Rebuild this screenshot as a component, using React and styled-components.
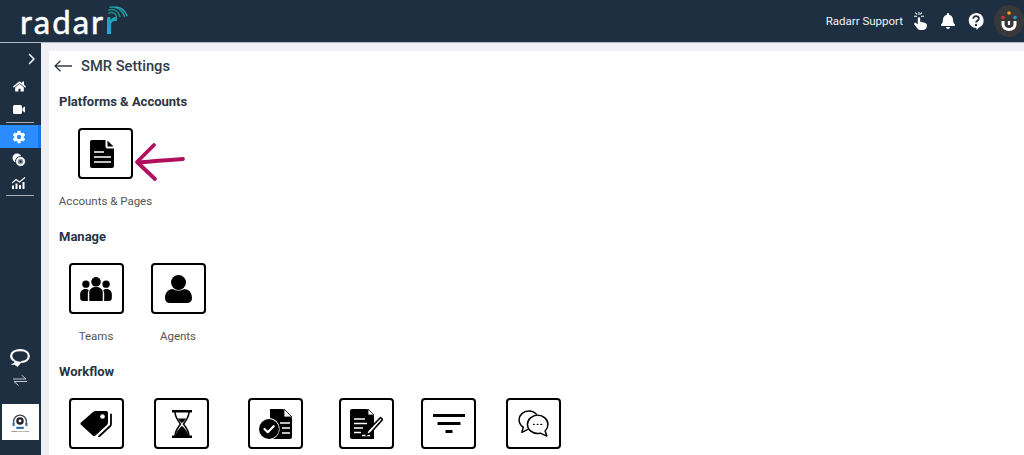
import styled, { createGlobalStyle } from "styled-components";
import { FaHome, FaBell } from "react-icons/fa";
import { IoSettingsSharp } from "react-icons/io5";
import { FaChevronRight } from "react-icons/fa6";

const GlobalStyle = createGlobalStyle`
    html, body {
        margin: 0;
        height: 100%;
        overflow: hidden;
        font-family: "Roboto", "Liberation Sans", sans-serif;
    }
    * {
        box-sizing: border-box;
    }
`;

const Page = styled.div`
    width: 1024px;
    height: 455px;
    display: flex;
    flex-direction: column;
    overflow: hidden;
    background-color: #EEF0F6;
`;
const Topo = styled.header`
    height: 43px;
    flex-shrink: 0;
    display: flex;
    align-items: center;
    justify-content: space-between;
    padding: 0 0 0 20px;
    background-color: #1E2F42;
    border-bottom: 1px solid #B4B8C0;
`;
const Logo = styled.div`
    position: relative;
    display: flex;
    font-family: "Lato", sans-serif;
    font-size: 33px;
    font-weight: 400;
    line-height: 40px;
    letter-spacing: 2px;
    color: #FFFFFF;
    -webkit-text-stroke: 0.5px #FFFFFF;
    span {
        color: transparent;
        -webkit-text-stroke: 0;
        background: linear-gradient(#1A9E93, #27A9E1);
        -webkit-background-clip: text;
        background-clip: text;
        font-weight: 700;
    }
    svg {
        position: absolute;
        right: -9px;
        top: 5px;
    }
`;
const TopoDireita = styled.div`
    display: flex;
    align-items: center;
    color: #FFFFFF;
`;
const Suporte = styled.span`
    font-size: 11.5px;
    color: #F0F2F5;
    margin-right: 3px;
`;
const IconeTopo = styled.div`
    width: 28px;
    display: flex;
    justify-content: center;
    align-items: center;
`;
const Avatar = styled.div`
    width: 30px;
    height: 32px;
    margin-left: 4px;
    border-radius: 50%;
    background-color: #38383A;
    display: flex;
    align-items: center;
    justify-content: center;
`;
const Corpo = styled.div`
    flex: 1;
    display: flex;
    min-height: 0;
`;
const Lateral = styled.nav`
    width: 41px;
    flex-shrink: 0;
    display: flex;
    flex-direction: column;
    align-items: stretch;
    background-color: #1E2F42;
    color: #FFFFFF;
    padding-top: 7px;
`;
const Expandir = styled.div`
    height: 17px;
    display: flex;
    justify-content: flex-end;
    align-items: center;
    padding-right: 4px;
    margin-bottom: 8px;
`;
const ItemLateral = styled.div`
    height: 23px;
    display: flex;
    align-items: center;
    justify-content: center;
    padding-right: ${props => props.$ativo ? "0" : "3px"};
    background-color: ${props => props.$ativo ? "#2A8CFF" : "transparent"};
    border-right: ${props => props.$ativo ? "3px solid #1A73E8" : "0 none"};
`;
const Divisor = styled.div`
    height: 1px;
    margin: ${props => props.$margem};
    width: 28px;
    margin-left: 6px;
    background-color: #A9B0B8;
`;
const LateralBaixo = styled.div`
    margin-top: auto;
    display: flex;
    flex-direction: column;
    align-items: center;
    padding-bottom: 15px;
    padding-right: 1px;
`;
const Troca = styled.div`
    margin: 7px 0 16px;
    height: 14px;
    display: flex;
`;
const CaixaEmpresa = styled.div`
    width: 37px;
    height: 36px;
    background-color: #FFFFFF;
    display: flex;
    flex-direction: column;
    align-items: center;
    justify-content: center;
    padding-top: 3px;
    small {
        font-size: 2.5px;
        line-height: 4px;
        color: #333333;
        white-space: nowrap;
    }
`;
const Area = styled.main`
    flex: 1;
    padding: 8px 0 0 8px;
    min-width: 0;
`;
const Painel = styled.div`
    height: 100%;
    background-color: #FFFFFF;
    overflow: hidden;
    padding-left: 10px;
`;
const TopoPainel = styled.div`
    height: 30px;
    display: flex;
    align-items: center;
    gap: 9px;
    margin-left: -5px;
`;
const Titulo = styled.h1`
    margin: 0;
    font-size: 14.7px;
    font-weight: 500;
    line-height: 30px;
    color: #333C4C;
`;
const Secao = styled.h2`
    margin: ${props => props.$margem};
    font-size: 13px;
    font-weight: 700;
    line-height: 20px;
    color: #2A3444;
`;
const Linha = styled.div`
    display: flex;
    margin-top: 16px;
`;
const Item = styled.div`
    position: relative;
    width: ${props => props.$largura}px;
    flex-shrink: 0;
    display: flex;
    flex-direction: column;
    align-items: center;
    white-space: nowrap;
`;
const Tile = styled.div`
    width: 55px;
    height: 51px;
    border: 2px solid #000000;
    border-radius: 4px;
    background-color: #FFFFFF;
    display: flex;
    align-items: center;
    justify-content: center;
    color: #000000;
    padding-right: ${props => props.$recuo || 0}px;
`;
const Rotulo = styled.p`
    margin: 14px 0 0;
    font-size: 11.5px;
    line-height: 16px;
    color: #555555;
`;
const Seta = styled.svg`
    position: absolute;
    left: 75px;
    top: 14px;
`;

function IconeDocumento() {
    return (
        <svg width="24" height="28" viewBox="0 0 24 28">
            <path d="M2 0h13.500v6.500a2 2 0 0 0 2 2H24V26a2 2 0 0 1-2 2H2a2 2 0 0 1-2-2V2a2 2 0 0 1 2-2z" fill="#000" />
            <path d="M17.500.5l6 6h-5.500a.5.5 0 0 1-.5-.5z" fill="#000" />
            <path d="M4 12h10M4 17h17M4 22h17" stroke="#fff" strokeWidth="1.600" />
        </svg>
    );
}
function IconeEquipe() {
    return (
        <svg width="32" height="24" viewBox="0 0 33 25">
            <circle cx="16.500" cy="5" r="5" />
            <circle cx="6" cy="7.500" r="3.800" />
            <circle cx="27" cy="7.500" r="3.800" />
            <path d="M9.500 25V16c0-3.500 3-5.500 7-5.500s7 2 7 5.500v9z" />
            <path d="M8 25H3c-1.700 0-3-1-3-3v-4c0-3 2.500-5.500 5.500-5.500 1.500 0 2.700.5 3.500 1.300C8.300 15 8 16 8 17z" />
            <path d="M25 25h5c1.700 0 3-1 3-3v-4c0-3-2.500-5.500-5.500-5.500-1.500 0-2.700.5-3.500 1.300.7 1.200 1 2.200 1 3.200z" />
        </svg>
    );
}
function IconeAgente() {
    return (
        <svg width="27" height="28" viewBox="0 0 27 28">
            <circle cx="13.500" cy="7.500" r="7.500" />
            <path d="M0 23c0-6 4-9 8-9 2 1.200 3.500 1.600 5.500 1.600s3.500-.4 5.500-1.600c4 0 8 3 8 9 0 3.200-2 5-5 5H5c-3 0-5-1.800-5-5z" />
        </svg>
    );
}
function IconeEtiquetas() {
    return (
        <svg width="33" height="27" viewBox="0 0 33 27">
            <path d="M1 12.500 13 2c.8-.7 1.500-1 2.500-1H26c1.200 0 2 .8 2 2v9.500c0 1-.3 1.800-1 2.500L15.500 25.500c-.8.800-2 .8-2.800 0L1 14.800c-.7-.7-.7-1.600 0-2.300z" />
            <circle cx="22.500" cy="6.500" r="2.300" fill="#fff" />
            <path d="M31 4.500v9.500c0 .8-.3 1.500-.8 2L19 26.500" fill="none" stroke="#000" strokeWidth="1.800" strokeLinecap="round" />
        </svg>
    );
}
function IconeAmpulheta() {
    return (
        <svg width="20" height="28" viewBox="0 0 20 28">
            <path d="M0 0h20v2.500H0zM0 25.500h20V28H0z" />
            <path d="M3 2c0 5 2.500 8 5.500 12-3 4-5.500 7-5.500 12M17 2c0 5-2.500 8-5.500 12 3 4 5.500 7 5.500 12" fill="none" stroke="#000" strokeWidth="1.500" />
            <path d="M6 8.500h8c-.8 1.700-2.200 3-4 4.500-1.800-1.500-3.200-2.800-4-4.500zM3.500 26c.5-4 4-8 6.500-10 2.500 2 6 6 6.500 10z" />
        </svg>
    );
}
function IconeAprovado() {
    return (
        <svg width="34" height="30" viewBox="0 0 34 30">
            <path d="M11 0h13l9 9v19a2 2 0 0 1-2 2H14a11 11 0 0 0-3-21z" fill="#000" />
            <path d="M25 0l8 8h-8z" fill="#fff" stroke="#000" strokeWidth=".8" />
            <path d="M21 14h10M23 19h8M23 24h8" stroke="#fff" strokeWidth="1.500" />
            <circle cx="10" cy="20" r="10" fill="#000" />
            <path d="M5.500 20l3.200 3.200 6-6" fill="none" stroke="#fff" strokeWidth="2.200" strokeLinecap="round" strokeLinejoin="round" />
        </svg>
    );
}
function IconeNota() {
    return (
        <svg width="33" height="30" viewBox="0 0 33 30">
            <path d="M2 0h15l7 7v23H2a2 2 0 0 1-2-2V2a2 2 0 0 1 2-2z" />
            <path d="M18 0l6 6h-6z" fill="#fff" stroke="#000" strokeWidth=".8" />
            <path d="M4 10h11M4 14.500h13M4 19h9M4 23.500h7M12 26.500h8" stroke="#fff" strokeWidth="1.500" />
            <path d="M30.500 8.500l2 2-12 13.500-4.500 2.200 1.800-4.500z" fill="#fff" stroke="#000" strokeWidth="1.600" strokeLinejoin="round" />
        </svg>
    );
}
function IconeFiltro() {
    return (
        <svg width="32" height="19" viewBox="0 0 32 19">
            <path d="M0 1.500h32M4.500 9.500h23M12.500 17.500h7" stroke="#000" strokeWidth="2.800" fill="none" />
        </svg>
    );
}
function IconeConversa() {
    return (
        <svg width="31" height="27" viewBox="0 0 33 29" fill="none" stroke="#000" strokeWidth="1.600">
            <path d="M11 20.500l-7 3.500 1.500-5.500C2.500 16.500 1 13.500 1 10.500 1 5.500 5.500 1 11.500 1c3.500 0 6.500 1.500 8.500 4" strokeLinejoin="round" />
            <path d="M21 5.500c6 0 11 4.500 11 10 0 2.800-1.200 5.200-3 7l1.800 5.500-7-3.200c-1 .4-1.800.5-2.800.5-6 0-11-4.300-11-9.800s5-10 11-10z" strokeLinejoin="round" />
            <path d="M16.500 15.500h.8M20.500 15.500h.8M24.500 15.500h.8" strokeLinecap="round" strokeWidth="1.300" />
        </svg>
    );
}
function IconeMao() {
    return (
        <svg width="13" height="18" viewBox="0 0 13 18" fill="#fff">
            <path d="M3.800 6.500c0-1.600 2.400-1.600 2.400 0v3.300l3.500.6c2 .4 3.300 1.400 3.300 3 0 2.400-1.500 4.600-4.300 4.600H6.500c-1.500 0-2.500-.7-3.300-1.800L.4 12.500c-.8-1.200.5-2.500 1.600-1.500l1.800 1.500z" />
            <path d="M4.500 0h1v3h-1zM0 3.800h3v1H0zM7 3.800h3v1H7zM1 1l.7-.7 1.800 1.800-.7.7zM8.300 1l-.7-.7-1.800 1.800.7.7z" />
        </svg>
    );
}
function IconeAjuda() {
    return (
        <svg width="16" height="17" viewBox="0 0 16 17">
            <path d="M8 0a7.500 7.500 0 0 1 3 14.400L8.500 17v-2A7.500 7.500 0 0 1 8 0z" fill="#fff" />
            <path d="M5.200 5.800c0-1.700 1.200-2.700 2.800-2.700s2.800 1 2.800 2.500c0 2.100-2.800 2-2.800 4" fill="none" stroke="#1E2F42" strokeWidth="1.800" />
            <circle cx="8" cy="12" r="1.200" fill="#1E2F42" />
        </svg>
    );
}
function IconeMarca() {
    return (
        <svg width="16" height="20" viewBox="0 0 16 20">
            <circle cx="2" cy="6.500" r="1.800" fill="#D8342C" />
            <circle cx="8" cy="2" r="1.800" fill="#F0A020" />
            <circle cx="14" cy="6.500" r="1.800" fill="#1F9BD8" />
            <path d="M2 10v3.500a6 5 0 0 0 12 0V10" fill="none" stroke="#fff" strokeWidth="3" />
            <path d="M8 10v4" stroke="#fff" strokeWidth="2.200" />
        </svg>
    );
}
function IconeCamera() {
    return (
        <svg width="12" height="9" viewBox="0 0 12 9" fill="#fff">
            <rect x="0" y="0" width="9" height="9" rx="1.500" />
            <path d="M9.500 3l2.500-1.500v6L9.500 6z" />
        </svg>
    );
}
function IconeMonitor() {
    return (
        <svg width="14" height="14" viewBox="0 0 14 14">
            <circle cx="5" cy="5" r="4.500" fill="#fff" />
            <circle cx="8.500" cy="8.500" r="5" fill="#fff" stroke="#1E2F42" />
            <circle cx="8.500" cy="8.500" r="2.800" fill="#8A95A3" />
            <circle cx="8.500" cy="8.500" r="1.200" fill="#1E2F42" />
        </svg>
    );
}
function IconeGrafico() {
    return (
        <svg width="14" height="12" viewBox="0 0 14 12" fill="#fff">
            <path d="M0 12V8.500h2V12zM3.500 12V6.500h2V12zM7 12V8h2v4zM10.500 12V5h2v7z" />
            <path d="M0 6l4-3.500 3.500 2.500L13 .5" fill="none" stroke="#fff" strokeWidth="1.200" />
        </svg>
    );
}
function IconeChat() {
    return (
        <svg width="20" height="18" viewBox="0 0 20 18" fill="none" stroke="#fff" strokeWidth="2.200">
            <path d="M4 11.500C2.300 10.500 1.200 9 1.200 7 1.200 3.500 5 1.200 10.200 1.200s8.600 2.300 8.600 5.800c0 3.200-3 5.600-7.500 6" />
            <path d="M1.500 15.500l3-1.500v-3c1.500 1.500 3.500 2 7 2l-4 4.500-3-2z" fill="#fff" strokeWidth=".6" />
        </svg>
    );
}
function IconeTroca() {
    return (
        <svg width="14" height="12" viewBox="0 0 14 12" fill="none" stroke="#C8CDD3" strokeWidth="1">
            <path d="M0 5h13L8.500 1M14 7.500H1L5.500 11.500" />
        </svg>
    );
}
function IconeEmpresa() {
    return (
        <svg width="16" height="16" viewBox="0 0 15 15">
            <path d="M1.500 9V7a6 6 0 0 1 12 0v2" fill="none" stroke="#3B4650" strokeWidth="1.200" />
            <circle cx="7.500" cy="6.500" r="3.500" fill="#222" />
            <circle cx="7.500" cy="6.500" r="1.300" fill="#fff" />
            <rect x="0.500" y="8" width="2" height="3.500" rx="1" fill="#2A6DA8" />
            <rect x="12.500" y="8" width="2" height="3.500" rx="1" fill="#2A6DA8" />
            <path d="M4 12h7v2H4z" fill="#2A6DA8" />
        </svg>
    );
}

export default function App() {
    return (
        <Page>
            <GlobalStyle />
            <Topo>
                <Logo>
                    radar<span>r</span>
                    <svg width="20" height="14" viewBox="0 0 20 14" fill="none" strokeLinecap="round">
                        <path d="M1 7c3-1 6 0 7.500 3.500" stroke="#1B8F8E" strokeWidth="1.500" />
                        <path d="M1 4c5-1.500 9 1 11 6.500" stroke="#1B8F8E" strokeWidth="1.500" />
                        <path d="M2 1.200c6-1 12 2 14.500 9" stroke="#1F9CA0" strokeWidth="1.500" />
                        <path d="M8 .8c4.500.5 9 3.500 11 9" stroke="#2AAFC0" strokeWidth="1.300" />
                    </svg>
                </Logo>
                <TopoDireita>
                    <Suporte>Radarr Support</Suporte>
                    <IconeTopo><IconeMao /></IconeTopo>
                    <IconeTopo><FaBell size={16} /></IconeTopo>
                    <IconeTopo><IconeAjuda /></IconeTopo>
                    <Avatar><IconeMarca /></Avatar>
                </TopoDireita>
            </Topo>
            <Corpo>
                <Lateral>
                    <Expandir><FaChevronRight size={12} /></Expandir>
                    <ItemLateral><FaHome size={13} /></ItemLateral>
                    <ItemLateral><IconeCamera /></ItemLateral>
                    <Divisor $margem="1px 0 2px" />
                    <ItemLateral $ativo><IoSettingsSharp size={14} /></ItemLateral>
                    <ItemLateral><IconeMonitor /></ItemLateral>
                    <ItemLateral><IconeGrafico /></ItemLateral>
                    <Divisor $margem="1px 0 0" />
                    <LateralBaixo>
                        <IconeChat />
                        <Troca><IconeTroca /></Troca>
                        <CaixaEmpresa>
                            <IconeEmpresa />
                            <small>TEAM SUPPORT</small>
                        </CaixaEmpresa>
                    </LateralBaixo>
                </Lateral>
                <Area>
                    <Painel>
                        <TopoPainel>
                            <svg width="18" height="12" viewBox="0 0 18 12" fill="none" stroke="#333C4C" strokeWidth="1.300">
                                <path d="M18 6H1M6.500.7 1 6l5.500 5.300" />
                            </svg>
                            <Titulo>SMR Settings</Titulo>
                        </TopoPainel>
                        <Secao $margem="11px 0 0">Platforms &amp; Accounts</Secao>
                        <Linha>
                            <Item $largura={93}>
                                <Tile $recuo={8}><IconeDocumento /></Tile>
                                <Rotulo>Accounts &amp; Pages</Rotulo>
                                <Seta width="52" height="40" viewBox="0 0 52 40" fill="none" stroke="#B0105E" strokeWidth="3.800" strokeLinecap="round" strokeLinejoin="round">
                                    <path d="M49 17c-15 1-29 2-45 3.500" />
                                    <path d="M20 3 3 20l18 17" />
                                </Seta>
                            </Item>
                        </Linha>
                        <Secao $margem="18px 0 0">Manage</Secao>
                        <Linha>
                            <Item $largura={74}>
                                <Tile><IconeEquipe /></Tile>
                                <Rotulo>Teams</Rotulo>
                            </Item>
                            <Item $largura={90}>
                                <Tile><IconeAgente /></Tile>
                                <Rotulo>Agents</Rotulo>
                            </Item>
                        </Linha>
                        <Secao $margem="18px 0 0">Workflow</Secao>
                        <Linha>
                            <Item $largura={74}><Tile><IconeEtiquetas /></Tile></Item>
                            <Item $largura={97}><Tile><IconeAmpulheta /></Tile></Item>
                            <Item $largura={91}><Tile><IconeAprovado /></Tile></Item>
                            <Item $largura={91}><Tile><IconeNota /></Tile></Item>
                            <Item $largura={73}><Tile><IconeFiltro /></Tile></Item>
                            <Item $largura={97}><Tile><IconeConversa /></Tile></Item>
                        </Linha>
                    </Painel>
                </Area>
            </Corpo>
        </Page>
    );
}
